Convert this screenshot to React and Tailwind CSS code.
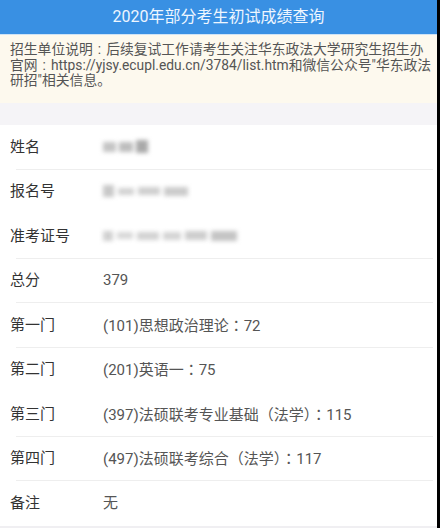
import React from "react";

const C = ({ children }) => (
  <span style={{ fontFamily: "'Noto Sans CJK TC', sans-serif" }}>{children}</span>
);
const Colon = () => <span className="mx-[5px]">:</span>;

const rows = [
  { label: "姓名", blur: "name", line: true },
  { label: "报名号", blur: "reg", line: false },
  { label: "准考证号", blur: "exam", line: true },
  { label: "总分", value: "379", line: true },
  { label: "第一门", value: <>(101)思想政治理论<C>：</C>72</>, line: true },
  { label: "第二门", value: <>(201)英语一<C>：</C>75</>, line: false },
  { label: "第三门", value: <>(397)法硕联考专业基础<C>（</C>法学<C>）：</C>115</>, line: true },
  { label: "第四门", value: <>(497)法硕联考综合<C>（</C>法学<C>）：</C>117</>, line: true },
  { label: "备注", value: "无", line: false },
];

function Blur({ kind }) {
  if (kind === "name")
    return (
      <div className="flex items-center gap-[3px] blur-[2px]">
        <div className="w-[13px] h-[10px] bg-[#c4c4c4]" />
        <div className="w-[14px] h-[10px] bg-[#bdbdbd]" />
        <div className="w-[12px] h-[13px] bg-[#a9a9a9]" />
      </div>
    );
  if (kind === "reg")
    return (
      <div className="flex items-center gap-[4px] blur-[2px]">
        <div className="w-[11px] h-[12px] bg-[#c8c8c8]" />
        <div className="w-[16px] h-[7px] bg-[#d2d2d2]" />
        <div className="w-[22px] h-[8px] bg-[#cfcfcf]" />
        <div className="w-[24px] h-[9px] bg-[#cbcbcb]" />
      </div>
    );
  return (
    <div className="flex items-center gap-[4px] blur-[2px]">
      <div className="w-[10px] h-[10px] bg-[#d0d0d0]" />
      <div className="w-[16px] h-[7px] bg-[#d8d8d8]" />
      <div className="w-[22px] h-[8px] bg-[#d2d2d2]" />
      <div className="w-[18px] h-[8px] bg-[#d4d4d4]" />
      <div className="w-[22px] h-[9px] bg-[#cdcdcd]" />
      <div className="w-[26px] h-[10px] bg-[#c4c4c4]" />
    </div>
  );
}

export default function App() {
  return (
    <div className="w-[440px] h-[528px] flex bg-black overflow-hidden">
      <div
        className="w-[437px] h-[528px] bg-[#f5f4f7] flex flex-col"
        style={{ fontFamily: "Roboto, 'Noto Sans CJK SC', sans-serif" }}
      >
        <div className="h-[35px] shrink-0 bg-[#3990e3] flex items-center justify-center text-[16px] text-[#eef6ff] border-b border-[#cfe3f5]">
          2020年部分考生初试成绩查询
        </div>
        <div className="h-[68px] shrink-0 bg-[#fdf9ee] pl-[10px] pt-[7px] text-[13.8px] leading-[15.5px] text-[#555555]">
          <div className="whitespace-nowrap">招生单位说明<Colon />后续复试工作请考生关注华东政法大学研究生招生办</div>
          <div className="whitespace-nowrap">官网<Colon />https://yjsy.ecupl.edu.cn/3784/list.htm和微信公众号"华东政法</div>
          <div className="whitespace-nowrap">研招"相关信息。</div>
        </div>
        <div className="h-[22px] shrink-0" />
        <div className="bg-white flex flex-col shrink-0">
          {rows.map((r, i) => (
            <div key={i} className="h-[44.5px] flex flex-col">
              <div className="flex-1 flex items-center pl-[10px] text-[15px] leading-[20px]">
                <div className="w-[93px] text-[#333333]">{r.label}</div>
                {r.value ? (
                  <div className="text-[#555555] h-[20px] whitespace-nowrap">{r.value}</div>
                ) : (
                  <Blur kind={r.blur} />
                )}
              </div>
              <div className={r.line ? "ml-[16px] mr-[4px] h-px bg-[#eeeeee]" : "h-px"} />
            </div>
          ))}
        </div>
        <div className="flex-1 bg-[#f0eff2]" />
      </div>
    </div>
  );
}
